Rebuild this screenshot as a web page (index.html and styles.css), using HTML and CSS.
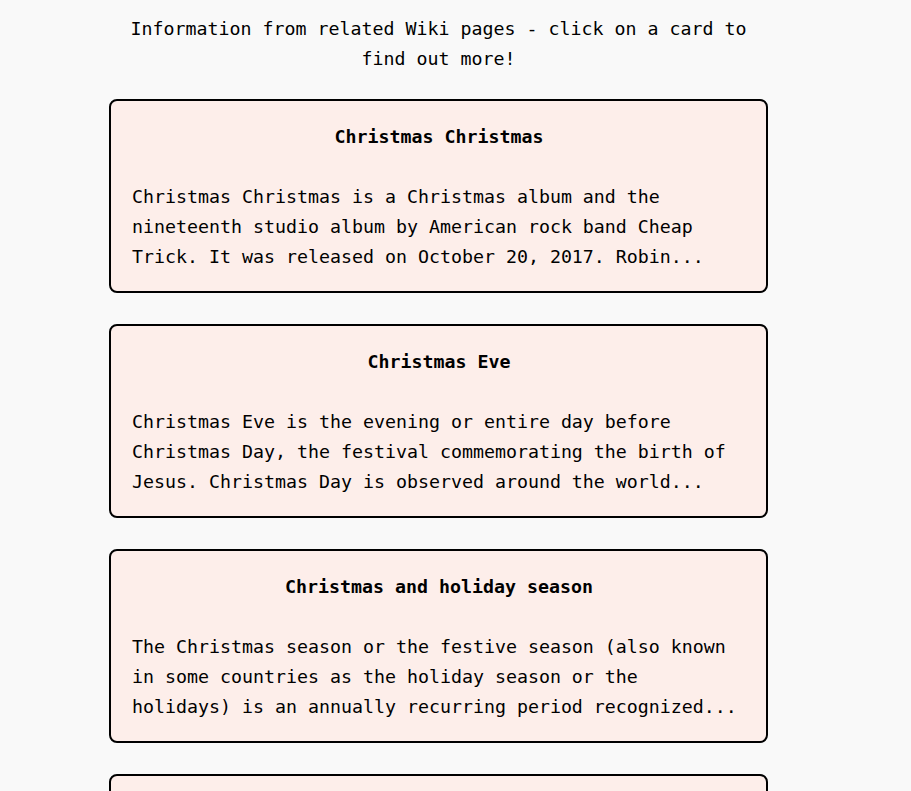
FILE: index.html
```html
<!DOCTYPE html>
<html>
<head>
<meta charset="utf-8">
<link rel="stylesheet" href="styles.css">
</head>
<body>
<main class="wrap">
  <p class="intro">Information from related Wiki pages - click on a card to find out more!</p>
  <section class="cards">
    <article class="card">
      <h2 class="card-title">Christmas Christmas</h2>
      <p class="card-text">Christmas Christmas is a Christmas album and the nineteenth studio album by American rock band Cheap Trick. It was released on October 20, 2017. Robin...</p>
    </article>
    <article class="card">
      <h2 class="card-title">Christmas Eve</h2>
      <p class="card-text">Christmas Eve is the evening or entire day before Christmas Day, the festival commemorating the birth of Jesus. Christmas Day is observed around the world...</p>
    </article>
    <article class="card">
      <h2 class="card-title">Christmas and holiday season</h2>
      <p class="card-text">The Christmas season or the festive season (also known in some countries as the holiday season or the holidays) is an annually recurring period recognized...</p>
    </article>
    <article class="card">
      <h2 class="card-title">Christmas tree</h2>
      <p class="card-text">A Christmas tree is a decorated tree, usually an evergreen conifer, such as a spruce, pine or fir, or an artificial tree of similar appearance...</p>
    </article>
  </section>
</main>
</body>
</html>
```
FILE: styles.css
```css
html, body {
  margin: 0;
  padding: 0;
  background: #f9f9f9;
}
body {
  font-family: "DejaVu Sans Mono", "Liberation Mono", monospace;
  font-size: 18.27px;
  line-height: 30px;
  color: #000;
}
::-webkit-scrollbar {
  width: 3px;
  background: #efefef;
}
::-webkit-scrollbar-thumb {
  background: #bdbdbd;
}
.wrap {
  width: 659px;
  margin-left: 109px;
  padding-top: 14px;
}
.intro {
  margin: 0 0 25px;
  text-align: center;
}
.cards {
  display: flex;
  flex-direction: column;
  gap: 31px;
}
.card {
  border: 2px solid #000;
  border-radius: 8px;
  background: #fdeeea;
  padding: 21px 20px 19px 21px;
}
.card-title {
  margin: 0 0 30px;
  font-size: inherit;
  font-weight: bold;
  text-align: center;
}
.card-text {
  margin: 0;
}
```
